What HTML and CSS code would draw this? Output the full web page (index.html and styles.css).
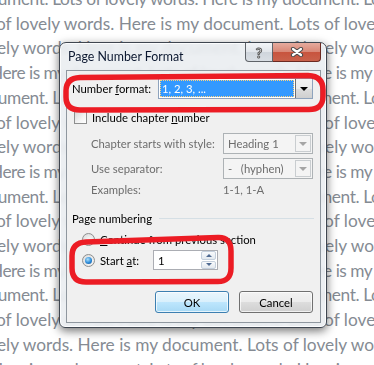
FILE: index.html
```html
<!DOCTYPE html>
<html>
<head>
  <meta charset="UTF-8">
  <title>Page Number Format</title>
  <link rel="stylesheet" href="styles.css">
</head>
<body>
  <!-- document text behind the dialog -->
  <div class="doc">
    <div class="doc-line a">cument. Lots of lovely words. Here is my document. Lots</div>
    <div class="doc-line b">of lovely words. Here is my document. Lots of lovely words.</div>
    <div class="doc-line c">ely words. Here is my document. Lots of lovely words.</div>
    <div class="doc-line d">Here is my document. Lots of lovely words. Here is my document.</div>
    <div class="doc-line a">cument. Lots of lovely words. Here is my document. Lots</div>
    <div class="doc-line b">of lovely words. Here is my document. Lots of lovely words.</div>
    <div class="doc-line c">ely words. Here is my document. Lots of lovely words.</div>
    <div class="doc-line d">Here is my document. Lots of lovely words. Here is my document.</div>
    <div class="doc-line a">cument. Lots of lovely words. Here is my document. Lots</div>
    <div class="doc-line b">of lovely words. Here is my document. Lots of lovely words.</div>
    <div class="doc-line c">ely words. Here is my document. Lots of lovely words.</div>
    <div class="doc-line d">Here is my document. Lots of lovely words. Here is my document.</div>
    <div class="doc-line a">cument. Lots of lovely words. Here is my document. Lots</div>
    <div class="doc-line b">of lovely words. Here is my document. Lots of lovely words.</div>
    <div class="doc-line c">ely words. Here is my document. Lots of lovely words.</div>
    <div class="doc-line d">Here is my document. Lots of lovely words. Here is my document.</div>
  </div>

  <div class="dialog">
    <div class="titlebar">
      <span class="title">Page Number Format</span>
      <div class="caption-buttons">
        <div class="cap-btn help">?</div>
        <div class="cap-btn close">
          <svg width="14" height="10" viewBox="0 0 14 10">
            <path d="M3 2 L11 8 M11 2 L3 8" stroke="#4a4a4a" stroke-width="4.2" stroke-linecap="round"/>
            <path d="M3 2 L11 8 M11 2 L3 8" stroke="#fff" stroke-width="2.2" stroke-linecap="round"/>
          </svg>
        </div>
      </div>
    </div>

    <div class="panel">
      <div class="row row-format">
        <span class="label label-format">Number <u>f</u>ormat:</span>
        <div class="combo combo-format">
          <div class="combo-value"><span class="selection">1, 2, 3, ...</span></div>
          <div class="combo-arrow"><span class="tri"></span></div>
        </div>
      </div>

      <div class="row row-check">
        <span class="checkbox"></span>
        <span>Include chapter <u>n</u>umber</span>
      </div>

      <div class="row row-style disabled">
        <span class="label label-sub">Chapter starts with style:</span>
        <div class="combo combo-off">
          <div class="combo-value">Heading 1</div>
          <div class="combo-arrow"><span class="tri"></span></div>
        </div>
      </div>

      <div class="row row-sep disabled">
        <span class="label label-sub">Use separator:</span>
        <div class="combo combo-off">
          <div class="combo-value">-&nbsp;&nbsp;&nbsp;(hyphen)</div>
          <div class="combo-arrow"><span class="tri"></span></div>
        </div>
      </div>

      <div class="row row-examples disabled">
        <span class="label label-sub">Examples:</span>
        <span>1-1, 1-A</span>
      </div>

      <div class="row row-group">
        <span>Page numbering</span>
        <div class="group-line"></div>
      </div>

      <div class="row row-radio">
        <span class="radio"></span>
        <span><u>C</u>ontinue from previous section</span>
      </div>

      <div class="row row-start">
        <span class="radio checked"></span>
        <span class="label label-start">Start <u>a</u>t:</span>
        <div class="spin">
          <div class="spin-value">1</div>
          <div class="spin-buttons">
            <div class="spin-btn"><span class="up"></span></div>
            <div class="spin-btn"><span class="down"></span></div>
          </div>
        </div>
      </div>

      <div class="row row-buttons">
        <div class="button default">OK</div>
        <div class="button">Cancel</div>
      </div>
    </div>
  </div>

  <!-- red marker annotations -->
  <svg class="marks" width="374" height="365" viewBox="0 0 374 365">
    <path d="M80 77.5 L308 75.5 Q323 76 323 90 L323 96 Q323 110 308 109.5 L80 110 Q66 110 66 97 L66 91 Q66 78 80 77.5 Z"/>
    <path d="M86 242 L218 237.5 Q231 237 231 251 L231 268 Q231 282 217 281.5 L86 282 Q72 282 72 268 L72 256 Q72 242.5 86 242 Z"/>
  </svg>
</body>
</html>
```

FILE: styles.css
```css
body {
  margin: 0;
  width: 374px;
  height: 365px;
  overflow: hidden;
  position: relative;
  background: #fff;
  font-family: Lato, 'Open Sans', sans-serif;
}

/* Document text */
.doc {
  margin-top: -13px;
  font-size: 17.3px;
  line-height: 24.7px;
  color: #858b93;
  white-space: nowrap;
}
.doc-line.a { text-indent: -10px; letter-spacing: -0.4px; }
.doc-line.b { text-indent: -4px; }
.doc-line.c { text-indent: -3px; }
.doc-line.d { text-indent: -10px; letter-spacing: -0.5px; }

/* Dialog window */
.dialog {
  position: absolute;
  left: 59px;
  top: 42px;
  width: 268px;
  height: 286px;
  box-sizing: border-box;
  border: 1px solid #3f4650;
  border-radius: 7px 7px 6px 6px;
  background: rgba(234, 237, 241, 0.9);
  backdrop-filter: blur(2px);
  box-shadow: 0 3px 10px rgba(0, 0, 0, 0.55), inset 0 0 0 1px rgba(255, 255, 255, 0.8);
  font-size: 11.3px;
  color: #000;
}

.titlebar {
  height: 27px;
  display: flex;
  justify-content: space-between;
  align-items: flex-start;
}

.title {
  padding: 6px 0 0 8px;
  font-size: 12.4px;
  color: #0c1830;
}

.caption-buttons {
  display: flex;
  margin-right: 5px;
}

.cap-btn {
  height: 19px;
  box-sizing: border-box;
  display: flex;
  align-items: center;
  justify-content: center;
  border: 1px solid #5f6369;
  border-top: none;
}

.help {
  width: 28px;
  border-radius: 0 0 0 4px;
  background: linear-gradient(#f3f5f8, #e1e5ea 50%, #cfd5dc 51%, #d9dee4);
  color: #fff;
  font-weight: 700;
  font-size: 14px;
  -webkit-text-stroke: 1px #5a5a5a;
}

.close {
  width: 48px;
  border-left: none;
  border-color: #6b2a22;
  border-radius: 0 0 4px 0;
  background: linear-gradient(#e6ab9e, #d98877 48%, #c8543e 52%, #c9614b);
}

/* Client area */
.panel {
  margin: 0 5px 0 6px;
  height: 253px;
  box-sizing: border-box;
  border: 1px solid #8f979f;
  background: #f0f0f0;
}

.row {
  display: flex;
  align-items: center;
}

.disabled {
  color: #6d6d6d;
}

.label-format {
  width: 86px;
  padding-left: 5px;
}

.label-sub {
  width: 132px;
  padding-left: 24px;
}

.row-format {
  margin-top: 7px;
  height: 21px;
}

.row-check {
  margin-top: 11px;
  height: 14px;
  padding-left: 7px;
  gap: 5px;
}

.row-style {
  margin-top: 9px;
  height: 21px;
}

.row-sep {
  margin-top: 4px;
  height: 21px;
}

.row-examples {
  margin-top: 3px;
  height: 14px;
}

.row-group {
  margin-top: 15px;
  height: 14px;
  padding: 0 6px 0 5px;
}

.group-line {
  flex: 1;
  height: 1px;
  margin-left: 7px;
  background: #d5dfe5;
}

.row-radio {
  margin-top: 7px;
  height: 14px;
  padding-left: 15px;
  gap: 5px;
}

.row-start {
  margin-top: 4px;
  height: 20px;
  padding-left: 15px;
}

.label-start {
  width: 53px;
  padding-left: 5px;
}

.row-buttons {
  margin-top: 21px;
  height: 22px;
  padding-left: 88px;
  gap: 10px;
}

/* Combo boxes */
.combo {
  height: 21px;
  box-sizing: border-box;
  display: flex;
  border: 1px solid #8ea3bd;
  background: #fff;
}

.combo-format {
  width: 155px;
}

.combo-value {
  flex: 1;
  display: flex;
  align-items: center;
  padding-left: 4px;
}

.combo-format .combo-value {
  padding: 1px;
}

.selection {
  flex: 1;
  align-self: stretch;
  display: flex;
  align-items: center;
  padding-left: 2px;
  background: #3399ff;
  color: #fff;
  outline: 1px dotted #ffd27a;
  outline-offset: -1px;
}

.combo-arrow {
  width: 17px;
  box-sizing: border-box;
  display: flex;
  align-items: center;
  justify-content: center;
  border-left: 1px solid #707070;
  background: linear-gradient(#f2f2f2, #ebebeb 50%, #dddddd 51%, #cfcfcf);
}

.tri {
  width: 0;
  height: 0;
  border-left: 4px solid transparent;
  border-right: 4px solid transparent;
  border-top: 4px solid #000;
}

.combo-off {
  width: 90px;
  border-color: #adb2b5;
  background: #f4f4f4;
}

.combo-off .combo-arrow {
  border: 1px solid #c9cdd0;
  margin: 1px;
  width: 16px;
  background: #f4f4f4;
}

.combo-off .tri {
  border-top-color: #a5a5a5;
}

/* Check and radio */
.checkbox {
  width: 13px;
  height: 13px;
  box-sizing: border-box;
  border: 1px solid #8e8f8f;
  background: linear-gradient(135deg, #d8d8d8, #f4f4f4 60%, #fff);
}

.radio {
  width: 13px;
  height: 13px;
  box-sizing: border-box;
  border: 1px solid #8e8f8f;
  border-radius: 50%;
  background: radial-gradient(circle at 60% 60%, #fdfdfd, #d5d5d5);
  display: flex;
  align-items: center;
  justify-content: center;
}

.radio.checked::after {
  content: "";
  width: 7px;
  height: 7px;
  border-radius: 50%;
  background: radial-gradient(circle at 40% 35%, #aee1fb, #2b8ad8 55%, #0b4a8f);
}

/* Spin box */
.spin {
  width: 65px;
  height: 20px;
  box-sizing: border-box;
  display: flex;
  border: 1px solid #abadb3;
  background: #fff;
}

.spin-value {
  flex: 1;
  display: flex;
  align-items: center;
  padding-left: 4px;
}

.spin-buttons {
  width: 15px;
  display: flex;
  flex-direction: column;
  gap: 1px;
  padding: 0 1px 0 0;
}

.spin-btn {
  flex: 1;
  display: flex;
  align-items: center;
  justify-content: center;
  border: 1px solid #c4cfdc;
  border-radius: 2px;
  background: linear-gradient(#f8fafc, #e3e9ef);
}

.up, .down {
  width: 0;
  height: 0;
  border-left: 3px solid transparent;
  border-right: 3px solid transparent;
}

.up {
  border-bottom: 3px solid #4f6a92;
}

.down {
  border-top: 3px solid #4f6a92;
}

/* Push buttons */
.button {
  width: 74px;
  height: 22px;
  box-sizing: border-box;
  display: flex;
  align-items: center;
  justify-content: center;
  border: 1px solid #707070;
  border-radius: 3px;
  background: linear-gradient(#f2f2f2, #ebebeb 50%, #dddddd 51%, #cfcfcf);
  box-shadow: inset 0 0 0 1px rgba(255, 255, 255, 0.7);
}

.button.default {
  border-color: #3c7fb1;
  background: linear-gradient(#eaf6fd, #d9f0fc 50%, #bee6fd 51%, #a7d9f5);
}

/* Annotation overlay */
.marks {
  position: absolute;
  left: 0;
  top: 0;
  pointer-events: none;
}

.marks path {
  fill: none;
  stroke: #ec1c24;
  stroke-width: 5.5;
  stroke-linejoin: round;
}
```
